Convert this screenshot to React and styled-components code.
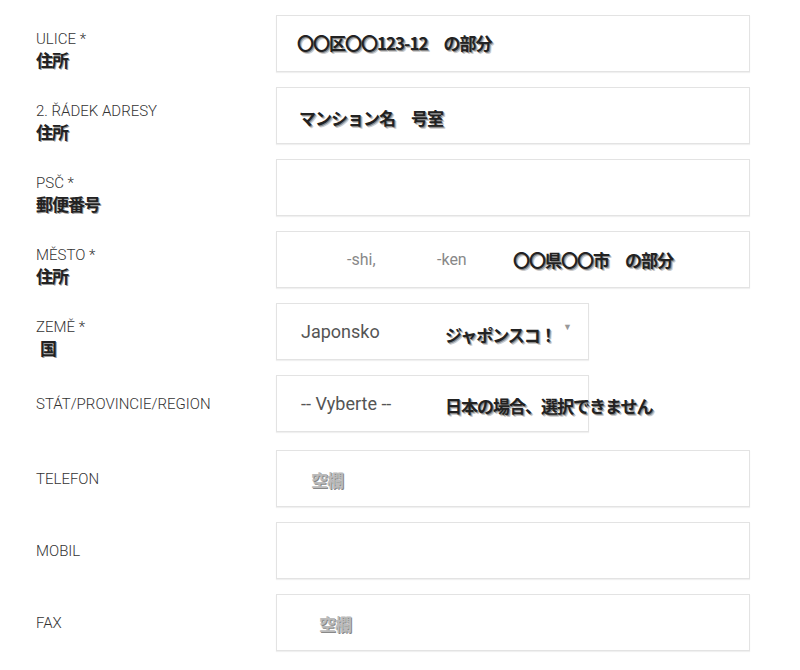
import React from "react";
import styled, { createGlobalStyle } from "styled-components";

const Global = createGlobalStyle`
  body { margin: 0; background: #fff; font-family: Roboto, "Liberation Sans", sans-serif; }
`;
const Form = styled.div`
  padding: 15px 0 0 36px;
  display: flex; flex-direction: column;
`;
const Row = styled.div`
  display: grid; grid-template-columns: 240px 474px;
  align-items: center; margin-bottom: ${p => p.$mb || 15}px;
`;
const Label = styled.div`
  font-size: 15px; color: #333; line-height: 20px; font-weight: 300;
  padding-top: ${p => p.$pt || 0}px;
`;
const Note = styled.span`
  display: block;
  font-family: "Noto Sans CJK JP", sans-serif; font-weight: 700;
  font-size: 17px; line-height: 22px; color: #222;
  letter-spacing: -1px;
  text-shadow: 1px 1px 0 #999, -1px 0 0 #fff;
  padding-left: ${p => p.$pl || 0}px;
`;
const Field = styled.div`
  position: relative; box-sizing: border-box;
  width: ${p => p.$w || 474}px; height: 57px;
  border: 1px solid #e3e3e3; box-shadow: 0 1px 1px rgba(0,0,0,0.06);
  display: flex; align-items: center; padding-left: 24px;
  font-size: 18px; color: #555;
`;
const Overlay = styled.span`
  position: absolute; left: ${p => p.$x}px; top: ${p => p.$y}px;
  white-space: nowrap;
  font-family: "Noto Sans CJK JP", sans-serif; font-weight: 700;
  font-size: 17px; color: ${p => p.$light ? "#bbb" : "#222"};
  letter-spacing: -1px;
  text-shadow: ${p => p.$light ? "1px 1px 0 #888" : "1px 1px 0 #888, 2px 2px 0 #ccc"};
`;
const Muted = styled.span`
  position: absolute; left: ${p => p.$x}px; font-size: 16px; color: #888;
`;
const Caret = styled.span`
  position: absolute; right: 16px; top: 18px; font-size: 9px; color: #999;
`;

export default function App() {
  return (
    <>
      <Global />
      <Form>
        <Row>
          <Label $pt={12}>ULICE *<Note>住所</Note></Label>
          <Field><Overlay $x={20} $y={14}>〇〇区〇〇123-12　の部分</Overlay></Field>
        </Row>
        <Row>
          <Label $pt={12}>2. ŘÁDEK ADRESY<Note>住所</Note></Label>
          <Field><Overlay $x={22} $y={17}>マンション名　号室</Overlay></Field>
        </Row>
        <Row>
          <Label $pt={12}>PSČ *<Note>郵便番号</Note></Label>
          <Field />
        </Row>
        <Row>
          <Label $pt={12}>MĚSTO *<Note>住所</Note></Label>
          <Field>
            <Muted $x={70}>-shi,</Muted>
            <Muted $x={160}>-ken</Muted>
            <Overlay $x={236} $y={15}>〇〇県〇〇市　の部分</Overlay>
          </Field>
        </Row>
        <Row>
          <Label $pt={12}>ZEMĚ *<Note $pl={4}>国</Note></Label>
          <Field $w={313}>Japonsko
            <Overlay $x={168} $y={18}>ジャポンスコ！</Overlay>
            <Caret>▼</Caret>
          </Field>
        </Row>
        <Row $mb={18}>
          <Label>STÁT/PROVINCIE/REGION</Label>
          <Field $w={313}>-- Vyberte --
            <Overlay $x={168} $y={17}>日本の場合、選択できません</Overlay>
          </Field>
        </Row>
        <Row>
          <Label>TELEFON</Label>
          <Field><Overlay $x={34} $y={16} $light>空欄</Overlay></Field>
        </Row>
        <Row>
          <Label>MOBIL</Label>
          <Field />
        </Row>
        <Row>
          <Label>FAX</Label>
          <Field><Overlay $x={42} $y={16} $light>空欄</Overlay></Field>
        </Row>
      </Form>
    </>
  );
}
